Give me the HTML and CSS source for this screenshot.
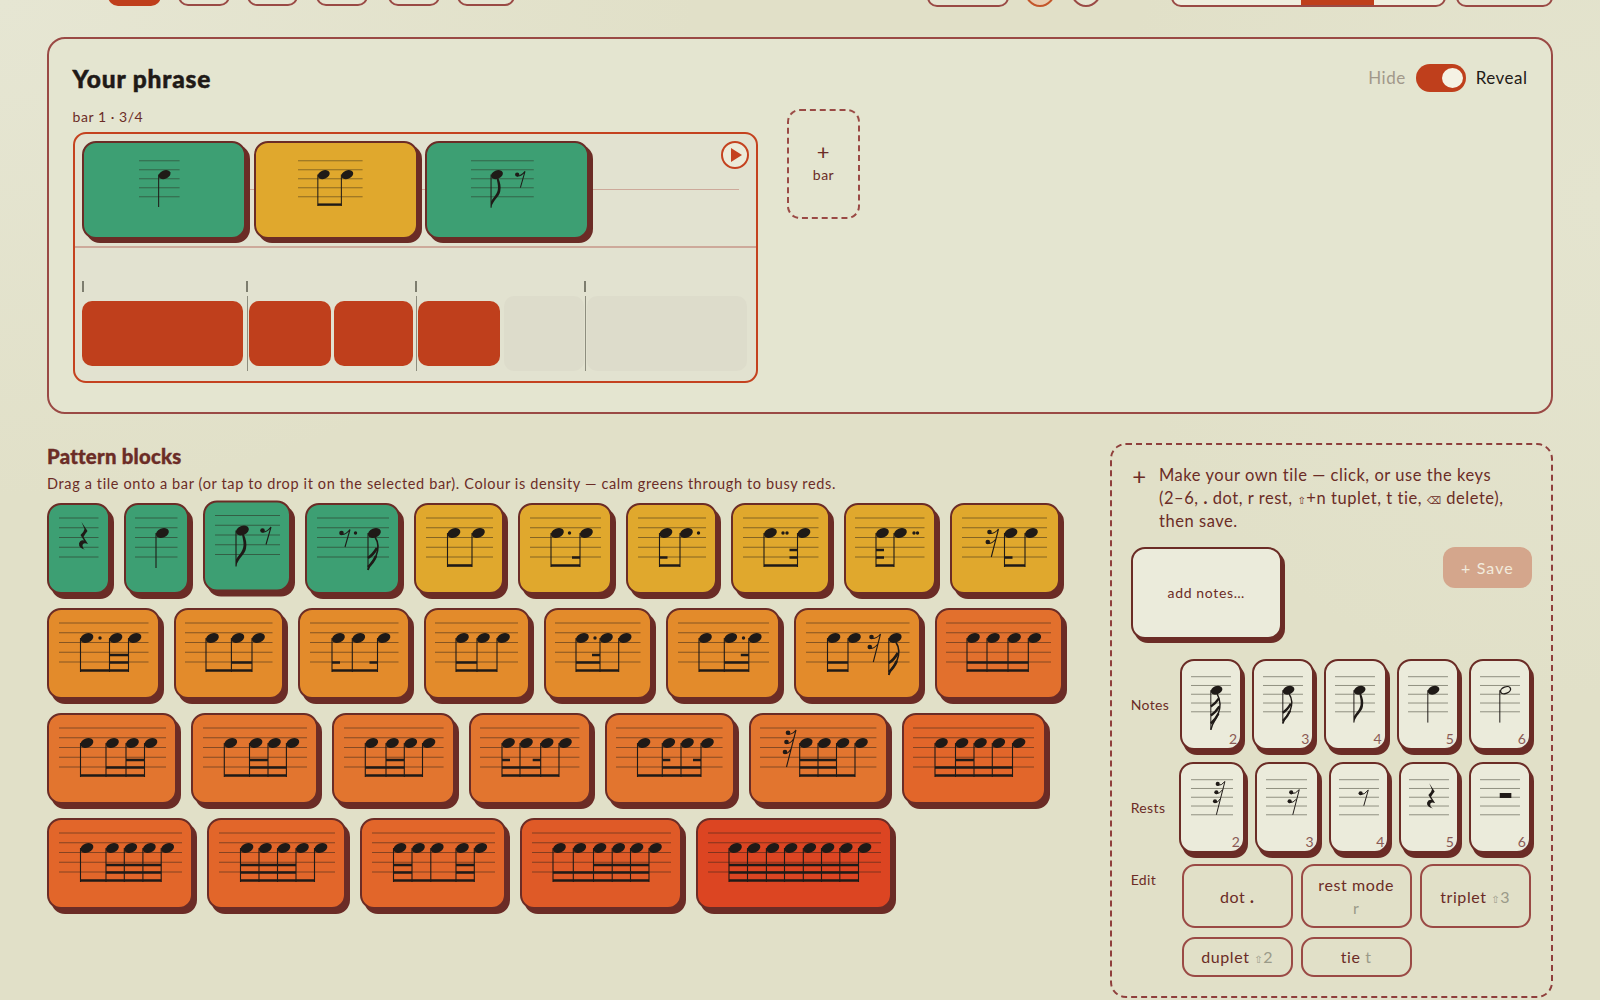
FILE: index.html
```html
<!DOCTYPE html>
<html lang="en">
<head>
<meta charset="utf-8">
<title>Your phrase</title>
<link rel="stylesheet" href="styles.css">
</head>
<body>
<svg class="defs" width="0" height="0" aria-hidden="true"><defs>
<g id="h"><ellipse cx="6.4" cy="15" rx="6.7" ry="4.6" transform="rotate(-22 6.4 15)"/></g>
<g id="f1"><path class="st" d="M0 15V51"/><path d="M0 51V44C3 39 7 36 7.5 30C7.8 26 6.5 22 6 19L8 19C10 24 11 28 10 33C9 39 2 43 0 51Z"/></g>
<g id="f2"><path class="st" d="M0 15V52"/><path class="rs thick" d="M7 19C11 25 10 33 8 38C6 43 2 45 0 52"/><path class="fb" d="M0 40Q5 37 9 30M0 49Q5 45 8 38"/></g>
<g id="f3"><path class="st" d="M0 15V59"/><path class="rs thick" d="M7 19C11 26 11 34 8 42C6 47 2 50 0 59"/><path class="fb" d="M0 33Q5 30 9 24M0 43Q5 40 9.5 33M0 52Q5 48 8.5 41"/></g>
<g id="qr"><path d="M-3 4L3 13Q.5 16-1 19L3.5 26Q-2 24-2 28Q-1.5 31 1 32Q-6 30-5.5 25.5Q-4 21.5-.5 22.5L-4 17Q-.5 14 0 11Z"/></g>
<g id="r8"><circle cx="0" cy="15" r="2.3"/><path class="rs" d="M0 16.5Q4 17 8.5 11.5L3.5 29"/></g>
<g id="r16"><circle cx="0" cy="14" r="2.3"/><circle cx="-1.7" cy="24" r="2.3"/><path class="rs" d="M0 15.5Q5 16 9 11L1.8 39M-1.7 25.5Q2 26 6 21.5"/></g>
<g id="r32"><circle cx="0" cy="4.7" r="2.3"/><circle cx="-1.5" cy="14" r="2.3"/><circle cx="-3" cy="24" r="2.3"/><path class="rs" d="M0 6Q4 7 8 2L-1.5 39M-1.5 15.5Q2 16 5.5 11M-3 25.5Q0 26 3 21"/></g>
</defs></svg>

<div class="topbar">
  <div class="group first">
    <span class="pill on w53"></span><span class="pill w52"></span><span class="pill w51"></span><span class="pill w52 g2"></span><span class="pill w52 g3"></span><span class="pill w57"></span>
  </div>
  <div class="group last">
    <span class="pill w82"></span>
    <span class="pill circle act"></span>
    <span class="pill circle"></span>
    <span class="seg"><span class="seg-a"></span><span class="seg-b"></span><span class="seg-c"></span></span>
    <span class="pill w97"></span>
  </div>
</div>

<main class="page">
<section class="phrase">
  <header class="phrase-head">
    <h1>Your phrase</h1>
    <div class="toggle-wrap"><span class="muted">Hide</span><span class="toggle"><span class="knob"></span></span><span class="strong">Reveal</span></div>
  </header>
  <div class="phrase-body">
    <div class="bar-col">
      <div class="bar-label">bar 1 · 3/4</div>
      <div class="bar">
        <div class="lane-tiles">
          <div class="btile green"><svg class="nt" width="40.6" height="51.7" viewBox="0 -3 44 56"><path class="s" d="M0 0H44M0 9.75H44M0 19.5H44M0 29.25H44M0 39H44"/><use href="#h" x="21.3"/><path class="st" d="M21.3 15V50"/></svg></div>
          <div class="btile yel"><svg class="nt" width="64.6" height="51.7" viewBox="0 -3 70 56"><path class="s" d="M0 0H70M0 9.75H70M0 19.5H70M0 29.25H70M0 39H70"/><use href="#h" x="21.5"/><use href="#h" x="47"/><path class="st" d="M21.5 15V49M47 15V49"/><path class="bm" d="M21.5 47.5H47"/></svg></div>
          <div class="btile green"><svg class="nt" width="62.8" height="51.7" viewBox="0 -3 68 56"><path class="s" d="M0 0H68M0 9.75H68M0 19.5H68M0 29.25H68M0 39H68"/><use href="#h" x="21.7"/><use href="#f1" x="21.7"/><use href="#r8" x="50"/></svg></div>
        </div>
        <button class="play" aria-label="Play"><svg width="14" height="16" viewBox="0 0 14 16"><path d="M2 1L13 8L2 15Z"/></svg></button>
        <div class="lane-rhythm">
          <div class="ticks"><span class="tick t1"></span><span class="tick t2"></span><span class="tick t3"></span></div>
          <div class="beats">
            <div class="beat b1"><span class="rb w161"></span></div>
            <div class="beat b2"><span class="rb w81"></span><span class="rb w79"></span></div>
            <div class="beat b3"><span class="rb w82"></span><span class="slot w79"></span></div>
            <div class="beat b4"><span class="slot w160"></span></div>
          </div>
        </div>
      </div>
    </div>
    <button class="add-bar"><span class="add-plus">+</span><span>bar</span></button>
  </div>
</section>

<div class="lower">
<section class="blocks">
  <h2>Pattern blocks</h2>
  <p class="desc">Drag a tile onto a bar (or tap to drop it on the selected bar). Colour is density — calm greens through to busy reds.</p>
  <div class="tiles">
    <div class="tile green"><svg class="nt" width="39.5" height="56" viewBox="0 -3 39.5 56"><path class="s" d="M0 0H39.5M0 9.75H39.5M0 19.5H39.5M0 29.25H39.5M0 39H39.5"/><use href="#qr" x="25.5"/></svg></div>
    <div class="tile green"><svg class="nt" width="42.5" height="56" viewBox="0 -3 42.5 56"><path class="s" d="M0 0H42.5M0 9.75H42.5M0 19.5H42.5M0 29.25H42.5M0 39H42.5"/><use href="#h" x="21"/><path class="st" d="M21 15V50"/></svg></div>
    <div class="tile green raised"><svg class="nt" width="65" height="56" viewBox="0 -3 65 56"><path class="s" d="M0 0H65M0 9.75H65M0 19.5H65M0 29.25H65M0 39H65"/><use href="#h" x="21"/><use href="#f1" x="21"/><use href="#r8" x="47.5"/></svg></div>
    <div class="tile green"><svg class="nt" width="72" height="56" viewBox="0 -3 72 56"><path class="s" d="M0 0H72M0 9.75H72M0 19.5H72M0 29.25H72M0 39H72"/><use href="#r8" x="24.5"/><circle cx="38.5" cy="15" r="1.7"/><use href="#h" x="51"/><use href="#f2" x="51"/></svg></div>
    <div class="tile yel"><svg class="nt" width="67" height="56" viewBox="0 -3 67 56"><path class="s" d="M0 0H67M0 9.75H67M0 19.5H67M0 29.25H67M0 39H67"/><use href="#h" x="21.5"/><use href="#h" x="46"/><path class="st" d="M21.5 15V49M46 15V49"/><path class="bm" d="M21.5 47.5H46"/></svg></div>
    <div class="tile yel"><svg class="nt" width="71" height="56" viewBox="0 -3 71 56"><path class="s" d="M0 0H71M0 9.75H71M0 19.5H71M0 29.25H71M0 39H71"/><use href="#h" x="21"/><use href="#h" x="50"/><circle cx="39.5" cy="15" r="1.7"/><path class="st" d="M21 15V49M50 15V49"/><path class="bm" d="M21 47.5H50M42 39.5H50"/></svg></div>
    <div class="tile yel"><svg class="nt" width="68" height="56" viewBox="0 -3 68 56"><path class="s" d="M0 0H68M0 9.75H68M0 19.5H68M0 29.25H68M0 39H68"/><use href="#h" x="21.5"/><use href="#h" x="42"/><circle cx="60.5" cy="15" r="1.7"/><path class="st" d="M21.5 15V49M42 15V49"/><path class="bm" d="M21.5 47.5H42M21.5 39.5H29.5"/></svg></div>
    <div class="tile yel"><svg class="nt" width="75.5" height="56" viewBox="0 -3 75.5 56"><path class="s" d="M0 0H75.5M0 9.75H75.5M0 19.5H75.5M0 29.25H75.5M0 39H75.5"/><use href="#h" x="21"/><use href="#h" x="54.5"/><circle cx="40" cy="15" r="1.7"/><circle cx="44" cy="15" r="1.7"/><path class="st" d="M21 15V49M54.5 15V49"/><path class="bm" d="M21 47.5H54.5M46.5 39.5H54.5M46.5 32H54.5"/></svg></div>
    <div class="tile yel"><svg class="nt" width="69.5" height="56" viewBox="0 -3 69.5 56"><path class="s" d="M0 0H69.5M0 9.75H69.5M0 19.5H69.5M0 29.25H69.5M0 39H69.5"/><use href="#h" x="21"/><use href="#h" x="39"/><circle cx="59" cy="15" r="1.7"/><circle cx="62.5" cy="15" r="1.7"/><path class="st" d="M21 15V49M39 15V49"/><path class="bm" d="M21 47.5H39M21 39.5H29M21 32H29"/></svg></div>
    <div class="tile yel"><svg class="nt" width="87" height="56" viewBox="0 -3 87 56"><path class="s" d="M0 0H85M0 9.75H85M0 19.5H85M0 29.25H85M0 39H85"/><use href="#r16" x="27.5"/><use href="#h" x="42.5"/><use href="#h" x="63"/><path class="st" d="M42.5 15V49M63 15V49"/><path class="bm" d="M42.5 47.5H63M42.5 39.5H50.5"/></svg></div>

    <div class="tile o1"><svg class="nt" width="89.5" height="56" viewBox="0 -3 89.5 56"><path class="s" d="M0 0H89.5M0 9.75H89.5M0 19.5H89.5M0 29.25H89.5M0 39H89.5"/><use href="#h" x="21.5"/><use href="#h" x="50.5"/><use href="#h" x="69.5"/><circle cx="41" cy="15" r="1.7"/><path class="st" d="M21.5 15V49M50.5 15V49M69.5 15V49"/><path class="bm" d="M21.5 47.5H69.5M50.5 39.5H69.5M50.5 32H69.5"/></svg></div>
    <div class="tile o1"><svg class="nt" width="87.5" height="56" viewBox="0 -3 87.5 56"><path class="s" d="M0 0H87.5M0 9.75H87.5M0 19.5H87.5M0 29.25H87.5M0 39H87.5"/><use href="#h" x="21"/><use href="#h" x="46.4"/><use href="#h" x="67"/><path class="st" d="M21 15V49M46.4 15V49M67 15V49"/><path class="bm" d="M21 47.5H67M46.4 39.5H67"/></svg></div>
    <div class="tile o1"><svg class="nt" width="88.5" height="56" viewBox="0 -3 88.5 56"><path class="s" d="M0 0H88.5M0 9.75H88.5M0 19.5H88.5M0 29.25H88.5M0 39H88.5"/><use href="#h" x="22"/><use href="#h" x="42.3"/><use href="#h" x="67.5"/><path class="st" d="M22 15V49M42.3 15V49M67.5 15V49"/><path class="bm" d="M22 47.5H67.5M22 39.5H30M59.5 39.5H67.5"/></svg></div>
    <div class="tile o1"><svg class="nt" width="83" height="56" viewBox="0 -3 83 56"><path class="s" d="M0 0H83M0 9.75H83M0 19.5H83M0 29.25H83M0 39H83"/><use href="#h" x="21"/><use href="#h" x="42"/><use href="#h" x="62"/><path class="st" d="M21 15V49M42 15V49M62 15V49"/><path class="bm" d="M21 47.5H62M21 39.5H42"/></svg></div>
    <div class="tile o1"><svg class="nt" width="85.5" height="56" viewBox="0 -3 85.5 56"><path class="s" d="M0 0H85.5M0 9.75H85.5M0 19.5H85.5M0 29.25H85.5M0 39H85.5"/><use href="#h" x="21"/><use href="#h" x="45"/><use href="#h" x="63.7"/><circle cx="40" cy="15" r="1.7"/><path class="st" d="M21 15V49M45 15V49M63.7 15V49"/><path class="bm" d="M21 47.5H63.7M21 39.5H45M37 32H45"/></svg></div>
    <div class="tile o1"><svg class="nt" width="91" height="56" viewBox="0 -3 91 56"><path class="s" d="M0 0H91M0 9.75H91M0 19.5H91M0 29.25H91M0 39H91"/><use href="#h" x="21"/><use href="#h" x="46.3"/><use href="#h" x="70.8"/><circle cx="65.5" cy="15" r="1.7"/><path class="st" d="M21 15V49M46.3 15V49M70.8 15V49"/><path class="bm" d="M21 47.5H70.8M46.3 39.5H70.8M62.8 32H70.8"/></svg></div>
    <div class="tile o1"><svg class="nt" width="103.5" height="56" viewBox="0 -3 103.5 56"><path class="s" d="M0 0H103.5M0 9.75H103.5M0 19.5H103.5M0 29.25H103.5M0 39H103.5"/><use href="#h" x="21.5"/><use href="#h" x="42"/><path class="st" d="M21.5 15V49M42 15V49"/><path class="bm" d="M21.5 47.5H42M21.5 39.5H42"/><use href="#r16" x="65.5"/><use href="#h" x="82.8"/><use href="#f2" x="82.8"/></svg></div>
    <div class="tile o2b"><svg class="nt" width="105" height="56" viewBox="0 -3 105 56"><path class="s" d="M0 0H105M0 9.75H105M0 19.5H105M0 29.25H105M0 39H105"/><use href="#h" x="21"/><use href="#h" x="41"/><use href="#h" x="62"/><use href="#h" x="82.3"/><path class="st" d="M21 15V49M41 15V49M62 15V49M82.3 15V49"/><path class="bm" d="M21 47.5H82.3M21 39.5H82.3"/></svg></div>

    <div class="tile o2"><svg class="nt" width="107" height="56" viewBox="0 -3 107 56"><path class="s" d="M0 0H107M0 9.75H107M0 19.5H107M0 29.25H107M0 39H107"/><use href="#h" x="21.5"/><use href="#h" x="47"/><use href="#h" x="67"/><use href="#h" x="85.5"/><path class="st" d="M21.5 15V49M47 15V49M67 15V49M85.5 15V49"/><path class="bm" d="M21.5 47.5H85.5M47 39.5H85.5M67 32H85.5"/></svg></div>
    <div class="tile o2"><svg class="nt" width="104" height="56" viewBox="0 -3 104 56"><path class="s" d="M0 0H104M0 9.75H104M0 19.5H104M0 29.25H104M0 39H104"/><use href="#h" x="21.3"/><use href="#h" x="46.5"/><use href="#h" x="65"/><use href="#h" x="83.4"/><path class="st" d="M21.3 15V49M46.5 15V49M65 15V49M83.4 15V49"/><path class="bm" d="M21.3 47.5H83.4M46.5 39.5H83.4M46.5 32H65"/></svg></div>
    <div class="tile o2"><svg class="nt" width="99.6" height="56" viewBox="0 -3 99.6 56"><path class="s" d="M0 0H99.6M0 9.75H99.6M0 19.5H99.6M0 29.25H99.6M0 39H99.6"/><use href="#h" x="21.3"/><use href="#h" x="42"/><use href="#h" x="60.3"/><use href="#h" x="78.5"/><path class="st" d="M21.3 15V49M42 15V49M60.3 15V49M78.5 15V49"/><path class="bm" d="M21.3 47.5H78.5M21.3 39.5H60.3M42 32H60.3"/></svg></div>
    <div class="tile o2"><svg class="nt" width="99.4" height="56" viewBox="0 -3 99.4 56"><path class="s" d="M0 0H99.4M0 9.75H99.4M0 19.5H99.4M0 29.25H99.4M0 39H99.4"/><use href="#h" x="22"/><use href="#h" x="40"/><use href="#h" x="60.7"/><use href="#h" x="79"/><path class="st" d="M22 15V49M40 15V49M60.7 15V49M79 15V49"/><path class="bm" d="M22 47.5H79M22 39.5H60.7M22 32H30M52.7 32H60.7"/></svg></div>
    <div class="tile o2"><svg class="nt" width="106.6" height="56" viewBox="0 -3 106.6 56"><path class="s" d="M0 0H106.6M0 9.75H106.6M0 19.5H106.6M0 29.25H106.6M0 39H106.6"/><use href="#h" x="21.5"/><use href="#h" x="46.3"/><use href="#h" x="65"/><use href="#h" x="85"/><path class="st" d="M21.5 15V49M46.3 15V49M65 15V49M85 15V49"/><path class="bm" d="M21.5 47.5H85M46.3 39.5H85M46.3 32H54.3M77 32H85"/></svg></div>
    <div class="tile o2"><svg class="nt" width="116.4" height="56" viewBox="0 -3 116.4 56"><path class="s" d="M0 0H116.4M0 9.75H116.4M0 19.5H116.4M0 29.25H116.4M0 39H116.4"/><use href="#r32" x="28"/><use href="#h" x="39.7"/><use href="#h" x="58"/><use href="#h" x="76.5"/><use href="#h" x="95"/><path class="st" d="M39.7 15V49M58 15V49M76.5 15V49M95 15V49"/><path class="bm" d="M39.7 47.5H95M39.7 39.5H76.5M39.7 32H76.5"/></svg></div>
    <div class="tile o3"><svg class="nt" width="121" height="56" viewBox="0 -3 121 56"><path class="s" d="M0 0H121M0 9.75H121M0 19.5H121M0 29.25H121M0 39H121"/><use href="#h" x="22"/><use href="#h" x="42.5"/><use href="#h" x="61"/><use href="#h" x="79.3"/><use href="#h" x="99.5"/><path class="st" d="M22 15V49M42.5 15V49M61 15V49M79.3 15V49M99.5 15V49"/><path class="bm" d="M22 47.5H99.5M22 39.5H99.5M42.5 32H61"/></svg></div>

    <div class="tile o3"><svg class="nt" width="123" height="56" viewBox="0 -3 123 56"><path class="s" d="M0 0H123M0 9.75H123M0 19.5H123M0 29.25H123M0 39H123"/><use href="#h" x="21.5"/><use href="#h" x="47"/><use href="#h" x="65.3"/><use href="#h" x="83.9"/><use href="#h" x="102.2"/><path class="st" d="M21.5 15V49M47 15V49M65.3 15V49M83.9 15V49M102.2 15V49"/><path class="bm" d="M21.5 47.5H102.2M47 39.5H102.2M47 32H102.2"/></svg></div>
    <div class="tile o3"><svg class="nt" width="116" height="56" viewBox="0 -3 116 56"><path class="s" d="M0 0H116M0 9.75H116M0 19.5H116M0 29.25H116M0 39H116"/><use href="#h" x="21.5"/><use href="#h" x="40"/><use href="#h" x="58.5"/><use href="#h" x="77"/><use href="#h" x="95.5"/><path class="st" d="M21.5 15V49M40 15V49M58.5 15V49M77 15V49M95.5 15V49"/><path class="bm" d="M21.5 47.5H95.5M21.5 39.5H77M21.5 32H77"/></svg></div>
    <div class="tile o3"><svg class="nt" width="123" height="56" viewBox="0 -3 123 56"><path class="s" d="M0 0H123M0 9.75H123M0 19.5H123M0 29.25H123M0 39H123"/><use href="#h" x="21.5"/><use href="#h" x="40"/><use href="#h" x="58.8"/><use href="#h" x="84"/><use href="#h" x="102.3"/><path class="st" d="M21.5 15V49M40 15V49M58.8 15V49M84 15V49M102.3 15V49"/><path class="bm" d="M21.5 47.5H102.3M21.5 39.5H40M21.5 32H40M84 39.5H102.3M84 32H102.3"/></svg></div>
    <div class="tile o4"><svg class="nt" width="139" height="56" viewBox="0 -3 139 56"><path class="s" d="M0 0H139M0 9.75H139M0 19.5H139M0 29.25H139M0 39H139"/><use href="#h" x="21"/><use href="#h" x="41.3"/><use href="#h" x="61.5"/><use href="#h" x="80.2"/><use href="#h" x="98.5"/><use href="#h" x="117"/><path class="st" d="M21 15V49M41.3 15V49M61.5 15V49M80.2 15V49M98.5 15V49M117 15V49"/><path class="bm" d="M21 47.5H117M21 39.5H117M61.5 32H117"/></svg></div>
    <div class="tile o5"><svg class="nt" width="173" height="56" viewBox="0 -3 173 56"><path class="s" d="M0 0H173M0 9.75H173M0 19.5H173M0 29.25H173M0 39H173"/><use href="#h" x="21"/><use href="#h" x="39.5"/><use href="#h" x="58.4"/><use href="#h" x="76.5"/><use href="#h" x="95.3"/><use href="#h" x="113.5"/><use href="#h" x="131.8"/><use href="#h" x="150.5"/><path class="st" d="M21 15V49M39.5 15V49M58.4 15V49M76.5 15V49M95.3 15V49M113.5 15V49M131.8 15V49M150.5 15V49"/><path class="bm" d="M21 47.5H150.5M21 39.5H150.5M21 32H150.5"/></svg></div>
  </div>
</section>

<aside class="maker">
  <div class="intro"><span class="intro-plus">+</span><p>Make your own tile — click, or use the keys<br>(2–6, <b>.</b> dot, r rest, <span class="sym">⇧</span>+n tuplet, t tie, <span class="sym">⌫</span> delete),<br>then save.</p></div>
  <div class="draft-row">
    <div class="draft">add notes…</div>
    <button class="save">+ Save</button>
  </div>
  <div class="prow">
    <span class="lab">Notes</span>
    <div class="ptile w62"><svg class="pn" width="40" height="59.4" viewBox="0 -3 44.4 66"><path class="s g" d="M0 0H44.4M0 9.75H44.4M0 19.5H44.4M0 29.25H44.4M0 39H44.4"/><use href="#h" x="22"/><use href="#f3" x="22"/></svg><span class="num">2</span></div>
    <div class="ptile w62"><svg class="pn" width="40" height="59.4" viewBox="0 -3 44.4 66"><path class="s g" d="M0 0H44.4M0 9.75H44.4M0 19.5H44.4M0 29.25H44.4M0 39H44.4"/><use href="#h" x="22"/><use href="#f2" x="22"/></svg><span class="num">3</span></div>
    <div class="ptile w62"><svg class="pn" width="40" height="59.4" viewBox="0 -3 44.4 66"><path class="s g" d="M0 0H44.4M0 9.75H44.4M0 19.5H44.4M0 29.25H44.4M0 39H44.4"/><use href="#h" x="21"/><use href="#f1" x="21"/></svg><span class="num">4</span></div>
    <div class="ptile w62"><svg class="pn" width="40" height="59.4" viewBox="0 -3 44.4 66"><path class="s g" d="M0 0H44.4M0 9.75H44.4M0 19.5H44.4M0 29.25H44.4M0 39H44.4"/><use href="#h" x="22"/><path class="st" d="M22 15V51"/></svg><span class="num">5</span></div>
    <div class="ptile w62"><svg class="pn" width="40" height="59.4" viewBox="0 -3 44.4 66"><path class="s g" d="M0 0H44.4M0 9.75H44.4M0 19.5H44.4M0 29.25H44.4M0 39H44.4"/><ellipse class="hollow" cx="28.4" cy="15" rx="5.8" ry="3.6" transform="rotate(-22 28.4 15)"/><path class="st" d="M22 15V51"/></svg><span class="num">6</span></div>
  </div>
  <div class="prow rests">
    <span class="lab lab-r">Rests</span>
    <div class="ptile w66"><svg class="pn" width="42" height="59.4" viewBox="0 -3 46.7 66"><path class="s g" d="M0 0H46.7M0 9.75H46.7M0 19.5H46.7M0 29.25H46.7M0 39H46.7"/><use href="#r32" x="29.7"/></svg><span class="num">2</span></div>
    <div class="ptile w64"><svg class="pn" width="41" height="59.4" viewBox="0 -3 45.6 66"><path class="s g" d="M0 0H45.6M0 9.75H45.6M0 19.5H45.6M0 29.25H45.6M0 39H45.6"/><use href="#r16" x="28"/></svg><span class="num">3</span></div>
    <div class="ptile w61"><svg class="pn" width="40" height="59.4" viewBox="0 -3 44.4 66"><path class="s g" d="M0 0H44.4M0 9.75H44.4M0 19.5H44.4M0 29.25H44.4M0 39H44.4"/><use href="#r8" x="24"/></svg><span class="num">4</span></div>
    <div class="ptile w60"><svg class="pn" width="40" height="59.4" viewBox="0 -3 44.4 66"><path class="s g" d="M0 0H44.4M0 9.75H44.4M0 19.5H44.4M0 29.25H44.4M0 39H44.4"/><use href="#qr" x="25.5"/></svg><span class="num">5</span></div>
    <div class="ptile w62"><svg class="pn" width="40" height="59.4" viewBox="0 -3 44.4 66"><path class="s g" d="M0 0H44.4M0 9.75H44.4M0 19.5H44.4M0 29.25H44.4M0 39H44.4"/><rect x="21.9" y="14.8" width="12.9" height="5.5"/></svg><span class="num">6</span></div>
  </div>
  <div class="edit-row">
    <span class="lab lab-e">Edit</span>
    <div class="edit-grid">
      <button class="eb tall">dot <i class="dk">.</i></button>
      <button class="eb tall">rest mode <i class="brk">r</i></button>
      <button class="eb tall">triplet <i><span class="sym">⇧</span>3</i></button>
      <button class="eb">duplet <i><span class="sym">⇧</span>2</i></button>
      <button class="eb">tie <i>t</i></button>
    </div>
  </div>
</aside>
</div>
</main>
</body>
</html>
```

FILE: styles.css
```css
* { box-sizing: border-box; }
html, body { margin: 0; height: 1000px; overflow: hidden; }
body {
  font-family: "Lato", "Noto Sans", sans-serif;
  color: #6b2c26;
  background: radial-gradient(ellipse 700px 500px at 0 0, #e6e6d3, rgba(230,230,211,0)), radial-gradient(ellipse 500px 500px at 100% 20%, #e4e4cf, rgba(228,228,207,0)), #e1e0c8;
}
.defs { display: block; width: 0; height: 0; }

.topbar { display: flex; justify-content: space-between; height: 7px; overflow: hidden; padding: 0 47.5px 0 108px; }
.group { display: flex; align-items: flex-end; }
.group.first { gap: 17px; padding-bottom: 1.5px; }
.group.last { gap: 15px; }
.pill { display: block; height: 36px; border: 2px solid #9a4a45; border-radius: 10px; background: #e6e5d2; }
.pill.on { background: #bf3f1c; border-color: #bf3f1c; }
.w53 { width: 53px; } .w52 { width: 52px; } .w51 { width: 51px; } .w57 { width: 58px; } .w82 { width: 82px; } .w97 { width: 97px; }
.g2 { margin-left: 1px; } .g3 { margin-left: 3px; }
.circle { width: 32px; border-radius: 50%; }
.circle.act { background: #e8cdb0; border-color: #c4562a; }
.seg { display: flex; width: 275px; height: 36px; border: 2px solid #9a4a45; border-radius: 10px; overflow: hidden; background: #efeede; margin-left: 0; margin-right: -5px; }
.seg-a { width: 128px; } .seg-b { width: 73px; background: #bf3f1c; } .seg-c { flex: 1; }
.circle + .circle { margin-left: -1px; margin-right: 54px; }

.page { padding: 30px 47.5px 0 47px; }
.phrase { height: 377px; border: 2px solid #9a4a45; border-radius: 18px; background: #e4e5d0; padding: 24px 23px 0 23.5px; }
.phrase-head { display: flex; justify-content: space-between; align-items: center; height: 29px; }
h1 { margin: 1px 0 0; font-size: 24.5px; font-weight: 900; color: #1f1a17; letter-spacing: .85px; -webkit-text-stroke: .5px #1f1a17; }
.toggle-wrap { display: flex; align-items: center; gap: 10px; font-size: 17px; letter-spacing: .5px; }
.muted { color: #a1988a; }
.strong { color: #1f1a17; }
.toggle { display: flex; align-items: center; justify-content: flex-end; width: 50px; height: 28px; border-radius: 14px; background: #bf3f1c; padding-right: 2.5px; }
.knob { width: 21px; height: 20px; border-radius: 50%; background: #f5f2e4; }

.phrase-body { display: flex; gap: 29.5px; margin-top: 16.5px; align-items: flex-start; }
.bar-col { width: 685px; }
.bar-label { font-size: 14px; line-height: 16px; height: 23.5px; letter-spacing: .55px; }
.bar { position: relative; height: 251px; border: 2px solid #c4421f; border-radius: 13px; background: #e2e2d0; }
.lane-tiles { display: flex; gap: 7.5px; height: 114px; padding: 7px 0 0 7.5px; border-bottom: 2px solid #cda99a; background: linear-gradient(#cda99a, #cda99a) no-repeat 7.5px 55px / 657px 1px; }
.btile { display: flex; justify-content: center; width: 164px; height: 98px; padding: 14.5px 10px 0 0; border: 2px solid #6b2c26; border-radius: 14px; box-shadow: 4px 4px 0 #6b2c26; }
.play { position: absolute; top: 7px; right: 7px; display: flex; align-items: center; justify-content: center; width: 28px; height: 28px; padding: 0 0 0 3px; border: 2px solid #c4421f; border-radius: 50%; background: #ecebd9; }
.play svg { fill: #c4421f; display: block; }
.lane-rhythm { padding: 33px 0 0 7.5px; }
.ticks { display: flex; height: 11px; margin-bottom: 4px; }
.tick { width: 2px; height: 11px; background: #7d7d6e; }
.t1 { margin-right: 162px; } .t2 { margin-right: 167px; } .t3 { margin-right: 167px; }
.ticks::after { content: ""; width: 2px; height: 11px; background: #7d7d6e; }
.beats { display: flex; align-items: stretch; height: 75px; }
.beat { display: flex; align-items: center; }
.b1 { width: 164.5px; }
.b2 { width: 169px; border-left: 1px solid #8d8d7e; padding-left: 1.5px; gap: 3px; }
.b3 { width: 169.5px; border-left: 1px solid #8d8d7e; padding-left: 1px; gap: 4.5px; }
.b4 { width: 162px; border-left: 1px solid #8d8d7e; padding-left: 1px; }
.rb { display: block; height: 65px; border-radius: 10px; background: #bf3f1c; }
.slot { display: block; height: 75px; border-radius: 10px; background: #dddccb; }
.w161 { width: 161px; } .w81 { width: 81.5px; } .w79 { width: 79.5px; } .w82 { width: 82px; } .w160 { width: 160px; }

.add-bar { display: flex; flex-direction: column; align-items: center; justify-content: center; width: 73px; height: 110px; padding: 0 0 3px; border: 2px dashed #9a4a45; border-radius: 13px; background: transparent; color: #6b2c26; font: 14px/20px "Lato", sans-serif; letter-spacing: .5px; }
.add-plus { font-size: 22px; line-height: 26px; }

.lower { display: grid; grid-template-columns: 1031px 442.5px; justify-content: space-between; margin-top: 28.5px; }
h2 { margin: 2.5px 0 0; font-size: 20.3px; line-height: 22px; font-weight: 900; color: #6b2c26; letter-spacing: .25px; -webkit-text-stroke: .4px #6b2c26; }
.desc { margin: 8px 0 9.7px; font-size: 14.5px; line-height: 18px; letter-spacing: .63px; }
.tiles { display: flex; flex-wrap: wrap; gap: 14px; width: 1040px; }
.tile { height: 91px; padding: 10px 9.5px 0; border: 2px solid #6b2c26; border-radius: 14px; box-shadow: 4px 5px 0 #6b2c26; }
.nt { display: block; fill: #1f1a17; overflow: visible; }
.raised { transform: translateY(-2.5px); }
.s { fill: none; stroke: #2a2018; stroke-opacity: .5; stroke-width: 1; }
.s.g { stroke: #8f8f80; stroke-opacity: 1; stroke-width: 1.1; }
.st { fill: none; stroke: #1f1a17; stroke-width: 1.1; }
.bm { fill: none; stroke: #1f1a17; stroke-width: 2.6; }
.rs { fill: none; stroke: #1f1a17; stroke-width: 1.1; }
.rs.thick { stroke-width: 1.6; }
.fb { fill: none; stroke: #1f1a17; stroke-width: 2.6; }
.green { background: #3d9f73; } .yel { background: #e0a82d; }
.o1 { background: #e38b2b; } .o2 { background: #e2752f; } .o2b { background: #e2702d; }
.o3 { background: #e2662a; } .o4 { background: #df5a27; } .o5 { background: #dc4522; }

.maker { height: 555.5px; border: 2px dashed #8f3f3c; border-radius: 16px; padding: 19.5px 19.5px 0 18.7px; font-size: 16.5px; }
.intro { display: flex; height: 68.5px; line-height: 23px; }
.intro-plus { width: 28.3px; padding-left: 1.5px; font-size: 24px; }
.intro p { margin: 0; letter-spacing: .55px; white-space: nowrap; }
.intro b { font-weight: 900; }
.sym { font-family: "DejaVu Sans", sans-serif; font-size: 10px; line-height: 1; }
.draft-row { display: flex; justify-content: space-between; align-items: flex-start; margin-top: 14px; }
.draft { display: flex; align-items: center; justify-content: center; width: 151px; height: 92.5px; border: 2.5px solid #6b2c26; border-radius: 14px; background: #ebebdb; box-shadow: 3px 4px 0 #6b2c26; font-size: 14px; letter-spacing: .65px; }
.save { width: 89px; height: 41px; margin-right: -1px; border: 0; border-radius: 12px; background: #d4a68c; color: #f2ebdc; font: 16px "Lato", sans-serif; letter-spacing: 1.1px; }
.prow { display: flex; align-items: center; gap: 10px; margin-top: 20px; }
.rests { margin-top: 11.5px; gap: 10px; }
.lab { width: 39.3px; font-size: 14px; letter-spacing: .35px; }
.lab-r { width: 38.9px; }
.ptile { position: relative; display: flex; justify-content: center; height: 91px; padding-top: 13px; border: 2.5px solid #6b2c26; border-radius: 14px; background: #ebebdb; box-shadow: 3px 5px 0 #6b2c26; }
.pn { display: block; fill: #1f1a17; overflow: visible; }
.hollow { fill: #ebebdb; stroke: #1f1a17; stroke-width: 1.5; }
.w62 { width: 62.4px; } .w66 { width: 66px; } .w64 { width: 64px; } .w61 { width: 61px; } .w60 { width: 60px; }
.num { position: absolute; right: 3px; bottom: 1px; font-size: 14px; color: #8a5a55; }
.edit-row { display: flex; margin-top: 11.5px; }
.lab-e { width: 51px; margin-top: 7px; }
.edit-grid { display: grid; grid-template-columns: repeat(3, 111px); gap: 8.5px 8px; }
.eb { height: 40.5px; padding: 0; border: 2px solid #9a4a45; border-radius: 13px; background: transparent; color: #6b2c26; font: 16px/23px "Lato", sans-serif; letter-spacing: .6px; }
.eb.tall { height: 64px; }
.eb i { font-style: normal; color: #9a9a88; }
.eb i.dk { color: #6b2c26; font-weight: 900; }
.eb i.brk { display: block; }
```
